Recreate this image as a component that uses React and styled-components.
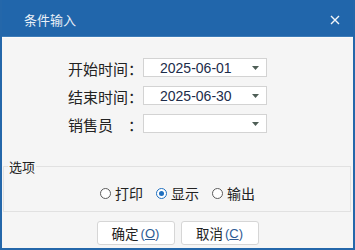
import React from "react";
import styled, { createGlobalStyle } from "styled-components";

const Global = createGlobalStyle`
  html, body { margin: 0; padding: 0; background: #ffffff; }
  body { font-family: "Noto Sans CJK SC", "Noto Sans", sans-serif; }
  * { box-sizing: border-box; }
`;

const Window = styled.div`
  width: 355px;
  height: 250px;
  display: flex;
  flex-direction: column;
  border: 2px solid #2467aa;
  border-top: none;
  background: #f5f5f5;
`;

const TitleBar = styled.div`
  height: 37px;
  flex: none;
  display: flex;
  align-items: center;
  justify-content: space-between;
  padding: 3px 13px 0 22px;
  background: #2166ab;
  border-bottom: 1px solid #3d7cb8;
  color: #e9f0f7;
  font-size: 13px;
`;

const CloseIcon = styled.svg`
  width: 10px;
  height: 10px;
  display: block;
`;

const Body = styled.div`
  flex: 1;
  display: flex;
  flex-direction: column;
  border-top: 1px solid #fbfbfb;
`;

const Form = styled.div`
  display: grid;
  grid-template-columns: 75px 124px;
  row-gap: 8px;
  margin: 20px 0 0 66px;
`;

const Label = styled.div`
  font-size: 15px;
  line-height: 19px;
  color: #222;
  white-space: nowrap;
  padding-top: 1px;
`;

const Combo = styled.div`
  height: 19px;
  display: flex;
  align-items: center;
  padding-left: 16px;
  background: #fff;
  border: 1px solid #d3d3d3;
  font-family: "Liberation Sans", "Noto Sans", sans-serif;
  font-size: 14px;
  color: #1c2c4a;
`;

const Arrow = styled.svg`
  width: 7px;
  height: 4px;
  margin-left: auto;
  margin-right: 7px;
  display: block;
`;

const Group = styled.fieldset`
  margin: 24px 2px 0 1px;
  padding: 0;
  min-width: 0;
  border: 1px solid #e1e1e1;
`;

const Legend = styled.legend`
  margin-left: 4px;
  padding: 0 1px;
  font-size: 13px;
  line-height: 17px;
  color: #222;
`;

const RadioRow = styled.div`
  display: flex;
  justify-content: center;
  gap: 13px;
  padding: 9px 0 8px;
  height: 36px;
  margin-left: 1px;
`;

const RadioItem = styled.label`
  display: flex;
  align-items: center;
  gap: 4px;
  font-size: 14px;
  line-height: 19px;
  color: #222;
`;

const Circle = styled.span`
  width: 11px;
  height: 11px;
  border-radius: 50%;
  background: #fff;
  border: 1px solid ${(p) => (p.$checked ? "#1f6fbf" : "#5c5c5c")};
  display: flex;
  align-items: center;
  justify-content: center;
  &::after {
    content: "";
    width: 5px;
    height: 5px;
    border-radius: 50%;
    background: ${(p) => (p.$checked ? "#1f6fbf" : "transparent")};
  }
`;

const Buttons = styled.div`
  display: flex;
  justify-content: center;
  gap: 6px;
  margin-top: 9px;
`;

const Button = styled.button`
  width: 78px;
  height: 24px;
  padding: 0;
  background: #fff;
  border: 1px solid #d6d6d6;
  border-radius: 3px;
  font-family: "Noto Sans CJK SC", "Noto Sans", sans-serif;
  font-size: 13.5px;
  color: #222;
  display: flex;
  align-items: center;
  justify-content: center;
`;

const Mnemonic = styled.span`
  color: #2d5b94;
  margin-left: 2px;
  font-family: "Liberation Sans", "Noto Sans", sans-serif;
  font-size: 13px;
`;

const DropArrow = () => (
  <Arrow viewBox="0 0 7 4">
    <path d="M0 0 H7 L3.5 4 Z" fill="#4f5e56" />
  </Arrow>
);

const Radio = ({ checked, children }) => (
  <RadioItem>
    <Circle $checked={checked} />
    {children}
  </RadioItem>
);

export default function App() {
  return (
    <>
      <Global />
      <Window>
        <TitleBar>
          <span>条件输入</span>
          <CloseIcon viewBox="0 0 10 10">
            <path d="M1 1 L9 9 M9 1 L1 9" stroke="#f2f6fa" strokeWidth="1.4" />
          </CloseIcon>
        </TitleBar>
        <Body>
          <Form>
            <Label>开始时间：</Label>
            <Combo>
              2025-06-01
              <DropArrow />
            </Combo>
            <Label>结束时间：</Label>
            <Combo>
              2025-06-30
              <DropArrow />
            </Combo>
            <Label>销售员　：</Label>
            <Combo>
              <DropArrow />
            </Combo>
          </Form>
          <Group>
            <Legend>选项</Legend>
            <RadioRow>
              <Radio>打印</Radio>
              <Radio checked>显示</Radio>
              <Radio>输出</Radio>
            </RadioRow>
          </Group>
          <Buttons>
            <Button>
              确定<Mnemonic>(<u>O</u>)</Mnemonic>
            </Button>
            <Button>
              取消<Mnemonic>(<u>C</u>)</Mnemonic>
            </Button>
          </Buttons>
        </Body>
      </Window>
    </>
  );
}
